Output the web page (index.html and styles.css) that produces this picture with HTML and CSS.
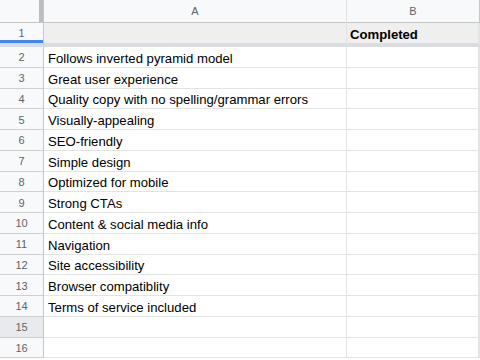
FILE: index.html
```html
<!DOCTYPE html>
<html>
<head>
<meta charset="utf-8">
<link rel="stylesheet" href="styles.css">
</head>
<body>
<div class="sheet">
  <div class="corner"><span class="freeze-col"></span></div>
  <div class="colhead">A</div>
  <div class="colhead last">B</div>

  <div class="rowhead r1">1</div>
  <div class="cell r1"></div>
  <div class="cell r1 bold last">Completed</div>

  <div class="rowhead">2</div><div class="cell">Follows inverted pyramid model</div><div class="cell last"></div>
  <div class="rowhead">3</div><div class="cell">Great user experience</div><div class="cell last"></div>
  <div class="rowhead">4</div><div class="cell">Quality copy with no spelling/grammar errors</div><div class="cell last"></div>
  <div class="rowhead">5</div><div class="cell">Visually-appealing</div><div class="cell last"></div>
  <div class="rowhead">6</div><div class="cell">SEO-friendly</div><div class="cell last"></div>
  <div class="rowhead">7</div><div class="cell">Simple design</div><div class="cell last"></div>
  <div class="rowhead">8</div><div class="cell">Optimized for mobile</div><div class="cell last"></div>
  <div class="rowhead">9</div><div class="cell">Strong CTAs</div><div class="cell last"></div>
  <div class="rowhead">10</div><div class="cell">Content &amp; social media info</div><div class="cell last"></div>
  <div class="rowhead">11</div><div class="cell">Navigation</div><div class="cell last"></div>
  <div class="rowhead">12</div><div class="cell">Site accessibility</div><div class="cell last"></div>
  <div class="rowhead">13</div><div class="cell">Browser compatiblity</div><div class="cell last"></div>
  <div class="rowhead">14</div><div class="cell">Terms of service included</div><div class="cell last"></div>
  <div class="rowhead hover">15</div><div class="cell"></div><div class="cell last"></div>
  <div class="rowhead">16</div><div class="cell"></div><div class="cell last"></div>
</div>
</body>
</html>
```

FILE: styles.css
```css
* { box-sizing: border-box; }
html, body { margin: 0; padding: 0; background: #ffffff; }
body { width: 480px; height: 360px; overflow: hidden; font-family: "Liberation Sans", Arial, sans-serif; }

.sheet {
  display: grid;
  grid-template-columns: 44px 303px 133px;
  grid-template-rows: 23px 24px repeat(15, 20.75px);
}

.corner {
  position: relative;
  background: #f8f9fa;
  border-bottom: 1px solid #c4c7c5;
  border-right: 1px solid #c4c7c5;
}
.freeze-col {
  position: absolute;
  right: 0;
  top: 0;
  bottom: 0;
  width: 4px;
  background: #bdbdbd;
}

.colhead {
  background: #f8f9fa;
  color: #5f6368;
  font-size: 11px;
  display: flex;
  align-items: center;
  justify-content: center;
  border-bottom: 1px solid #c4c7c5;
  border-right: 1px solid #e1e1e1;
}
.colhead.last { border-right: 1px solid #c4c7c5; }

.rowhead {
  background: #f8f9fa;
  color: #5f6368;
  font-size: 11px;
  display: flex;
  align-items: center;
  justify-content: center;
  padding-top: 1px;
  border-right: 1px solid #c4c7c5;
  border-bottom: 1px solid #d0d0d0;
}
.rowhead.hover { background: #e8eaed; }

.cell {
  color: #000000;
  font-size: 13.15px;
  display: flex;
  align-items: flex-end;
  padding-left: 4px;
  padding-bottom: 1px;
  white-space: nowrap;
  overflow: hidden;
  border-bottom: 1px solid #e2e3e3;
  border-right: 1px solid #e2e3e3;
}
.cell.last { border-right: 2px solid #e2e3e3; padding-left: 3px; }

.r1 {
  background: #efefef;
  border-bottom: 4px solid #dadce0;
  padding-bottom: 1px;
}
.rowhead.r1 { box-shadow: inset 0 -3px 0 #4285f4; background: #f8f9fa; padding-top: 0; }
.bold { font-weight: bold; }
```
